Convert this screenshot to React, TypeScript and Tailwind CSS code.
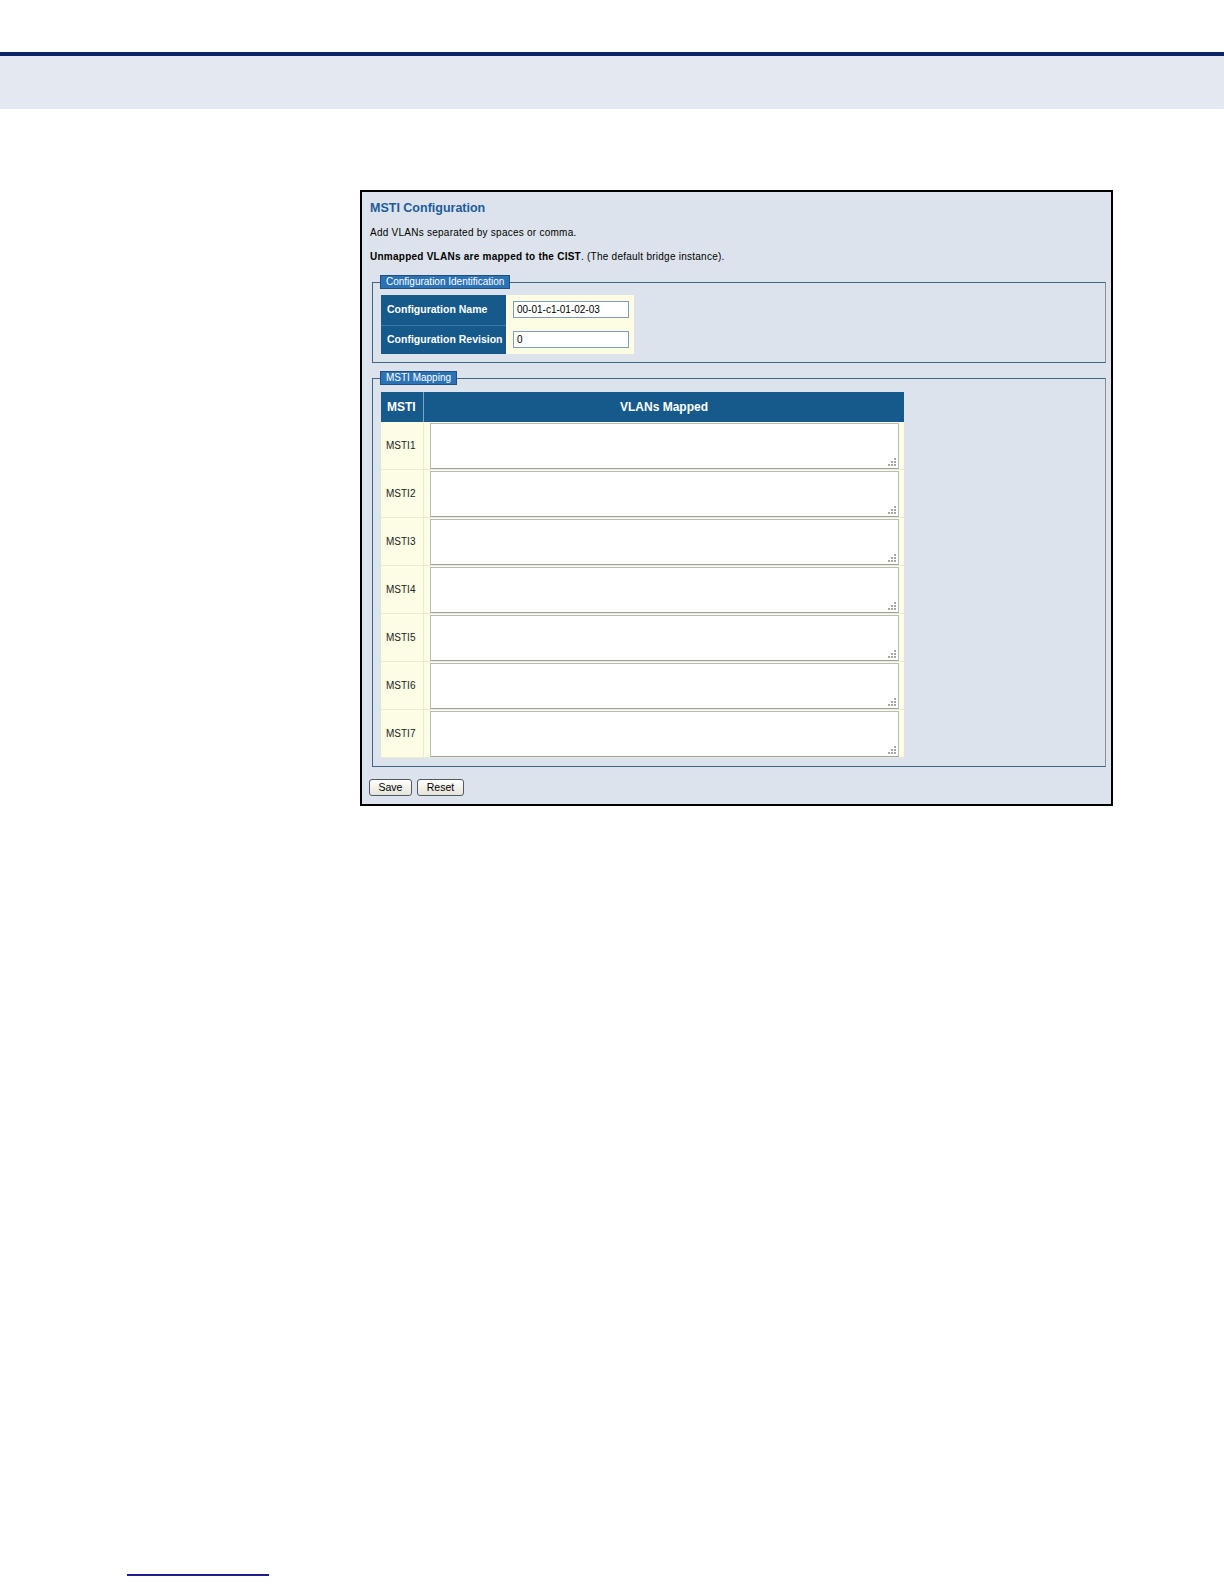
const mstiRows = [1, 2, 3, 4, 5, 6, 7];

// little dotted resize grip drawn in the textarea corner
function Grip() {
  const dots = [
    [6, 0],
    [3, 3],
    [6, 3],
    [0, 6],
    [3, 6],
    [6, 6],
  ];
  return (
    <svg className="pointer-events-none absolute bottom-[3px] right-[3px]" width="8" height="8" viewBox="0 0 8 8">
      {dots.map(([x, y]) => (
        <rect key={`${x}-${y}`} x={x} y={y} width="2" height="2" fill="#a9a9a0" />
      ))}
    </svg>
  );
}

// legend sits after the fieldset's left padding, so pull it back a pixel
function Legend({ children }: { children: React.ReactNode }) {
  return (
    <legend className="-ml-[1px] h-[14px] border border-[#1e4f7e] bg-[#2c73b6] px-[5px] text-[10px] leading-[12px] text-white">
      {children}
    </legend>
  );
}

export default function App() {
  return (
    <div className="min-h-[1584px] bg-white font-['Liberation_Sans',Arial,sans-serif] text-[10px] text-black">
      {/* page header band */}
      <div className="h-[52px]" />
      <div className="h-[4px] bg-[#0c2563]" />
      <div className="h-[53px] bg-[#e4e8f0]" />

      <div className="pl-[360px] pt-[81px]">
        <div className="h-[616px] w-[753px] border-2 border-black bg-[#dce3ec] pl-[8px] pr-[5px] pt-[8px]">
          <h1 className="text-[12.5px] font-bold leading-[16px] text-[#1d5c99]">MSTI Configuration</h1>
          <p className="mt-[11px] leading-[12px] tracking-[0.25px]">Add VLANs separated by spaces or comma.</p>
          <p className="mt-[12px] leading-[12px] tracking-[0.25px]">
            <b>Unmapped VLANs are mapped to the CIST</b>. (The default bridge instance).
          </p>

          {/* Configuration Identification */}
          <fieldset className="ml-[2px] mt-[12px] border border-[#3f6585] border-r-[#8a8f96] pb-[8px] pl-[8px]">
            <Legend>Configuration Identification</Legend>
            <div className="mt-[6px] w-[253px] bg-[#fdfde4]">
              <div className="flex h-[29.5px]">
                <div className="flex w-[125px] items-center bg-[#165a8c] pl-[6px] text-[10.5px] font-bold text-white">
                  Configuration Name
                </div>
                <div className="flex flex-1 items-center pl-[7px]">
                  <input
                    defaultValue="00-01-c1-01-02-03"
                    className="h-[17px] w-[116px] border border-[#7f9db9] bg-white pl-[3px] text-[10px] outline-none"
                  />
                </div>
              </div>
              <div className="flex h-[29.5px]">
                <div className="flex w-[125px] items-center border-t border-[#3a78a8] bg-[#165a8c] pl-[6px] text-[10.5px] font-bold text-white">
                  Configuration Revision
                </div>
                <div className="flex flex-1 items-center pl-[7px]">
                  <input
                    defaultValue="0"
                    className="h-[17px] w-[116px] border border-[#7f9db9] bg-white pl-[3px] text-[10px] outline-none"
                  />
                </div>
              </div>
            </div>
          </fieldset>

          {/* MSTI Mapping */}
          <fieldset className="ml-[2px] mt-[8px] border border-[#3f6585] border-r-[#8a8f96] pb-[8px] pl-[8px]">
            <Legend>MSTI Mapping</Legend>
            <div className="mt-[7px] w-[523px] bg-[#fdfde6]">
              <div className="flex h-[30px] bg-[#165a8c] text-[12px] font-bold text-white">
                <div className="flex w-[43px] items-center border-r border-[#7aa4c8] pl-[6px]">MSTI</div>
                <div className="flex flex-1 items-center justify-center">VLANs Mapped</div>
              </div>
              {mstiRows.map((n) => (
                <div key={n} className="flex h-[48px] border-b border-[#ecebd2]">
                  <div className="flex w-[43px] items-center border-r border-[#ecebd2] pl-[5px] text-[#222]">
                    MSTI{n}
                  </div>
                  <div className="flex flex-1 items-center pl-[6px]">
                    <div className="relative">
                      <textarea className="block h-[46px] w-[469px] resize-none border border-[#b9bcbf] border-b-[#9ea2a6] bg-white outline-none" />
                      <Grip />
                    </div>
                  </div>
                </div>
              ))}
            </div>
          </fieldset>

          <div className="-ml-[1px] mt-[12px] flex gap-[5px]">
            <button className="h-[17px] w-[43px] rounded-[3px] border border-[#505a64] bg-gradient-to-b from-white to-[#e6e4da] text-[10.5px] leading-[15px]">
              Save
            </button>
            <button className="h-[17px] w-[47px] rounded-[3px] border border-[#505a64] bg-gradient-to-b from-white to-[#e6e4da] text-[10.5px] leading-[15px]">
              Reset
            </button>
          </div>
        </div>
      </div>

      {/* footer rule */}
      <div className="ml-[127px] mt-[768px] h-[2px] w-[142px] bg-[#1c1c8c]" />
    </div>
  );
}
